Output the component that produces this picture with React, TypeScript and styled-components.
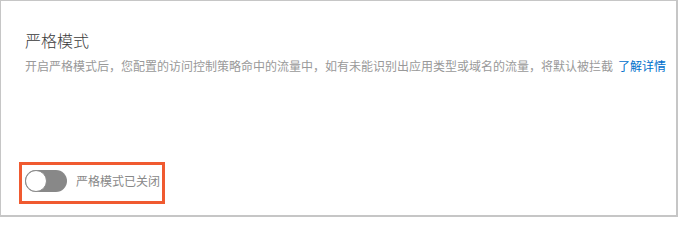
import React, { useState } from "react";
import styled, { createGlobalStyle } from "styled-components";

const GlobalStyle = createGlobalStyle`
  html, body {
    margin: 0;
    padding: 0;
    background: #ffffff;
  }
  body {
    font-family: "Noto Sans CJK SC", "Noto Sans", sans-serif;
  }
`;

const Panel = styled.section`
  box-sizing: border-box;
  width: 678px;
  height: 217px;
  border: 1px solid #c6c6c6;
  border-right-width: 2px;
  border-bottom-width: 2px;
  padding: 27px 0 0 24px;
  display: flex;
  flex-direction: column;
`;

const Title = styled.h3`
  margin: 0;
  font-size: 16px;
  line-height: 24px;
  font-weight: 300;
  color: #3a3a3a;
`;

const Description = styled.p`
  margin: 4px 0 0;
  font-size: 12px;
  line-height: 20px;
  color: #999999;
  white-space: nowrap;
`;

const Link = styled.a`
  color: #0070cc;
  text-decoration: none;
  margin-left: 5px;
  cursor: pointer;
`;

const Highlight = styled.div`
  margin-top: auto;
  margin-bottom: 11px;
  margin-left: -6px;
  align-self: flex-start;
  border: 3px solid #f05a30;
  padding: 5px 2px 9px 3px;
  display: flex;
  align-items: center;
  gap: 9px;
`;

const Track = styled.button<{ $on: boolean }>`
  position: relative;
  width: 42px;
  height: 22px;
  border: none;
  padding: 0;
  border-radius: 11px;
  background: ${(p) => (p.$on ? "#0070cc" : "#888888")};
  cursor: pointer;
  flex-shrink: 0;
`;

const Knob = styled.span<{ $on: boolean }>`
  position: absolute;
  top: 0;
  left: ${(p) => (p.$on ? "20px" : "0")};
  box-sizing: border-box;
  width: 22px;
  height: 22px;
  border-radius: 50%;
  background: #ffffff;
  border: 1px solid #8a8a8a;
`;

const SwitchLabel = styled.span`
  font-size: 12px;
  line-height: 22px;
  color: #888888;
`;

export default function App() {
  const [on, setOn] = useState(false);
  return (
    <>
      <GlobalStyle />
      <Panel>
        <Title>严格模式</Title>
        <Description>
          开启严格模式后，您配置的访问控制策略命中的流量中，如有未能识别出应用类型或域名的流量，将默认被拦截
          <Link>了解详情</Link>
        </Description>
        <Highlight>
          <Track $on={on} onClick={() => setOn(!on)} aria-pressed={on}>
            <Knob $on={on} />
          </Track>
          <SwitchLabel>{on ? "严格模式已开启" : "严格模式已关闭"}</SwitchLabel>
        </Highlight>
      </Panel>
    </>
  );
}
